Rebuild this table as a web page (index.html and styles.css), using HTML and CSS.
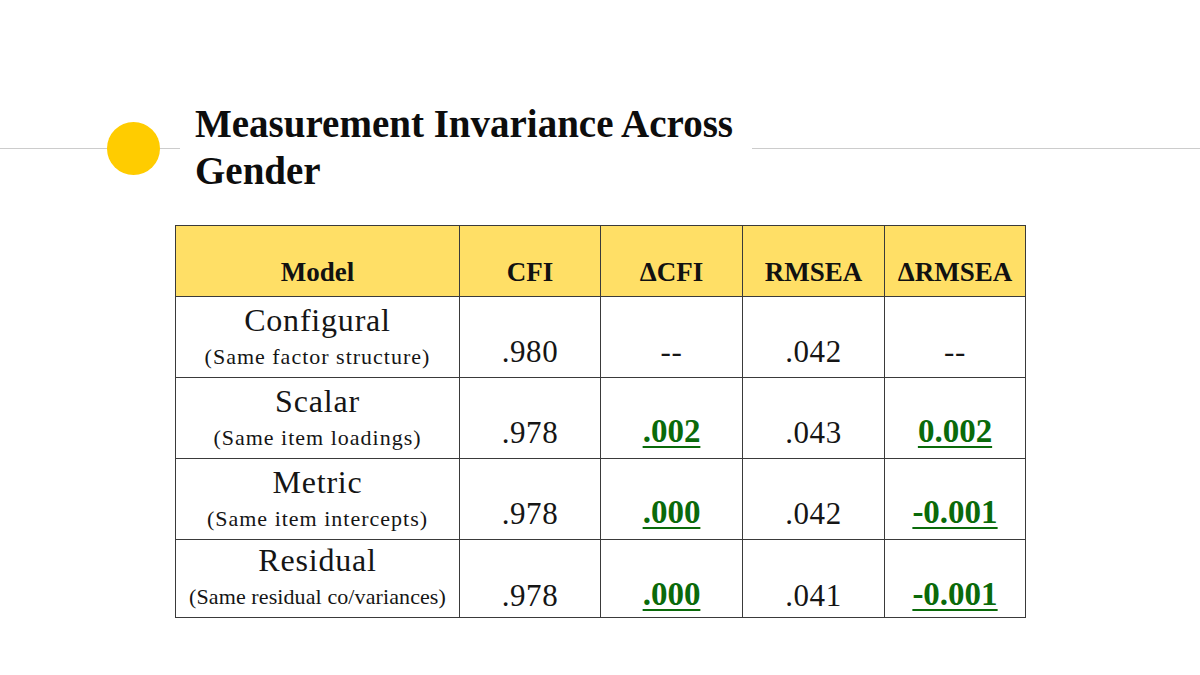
FILE: index.html
```html
<!DOCTYPE html>
<html lang="en">
<head>
<meta charset="utf-8">
<title>Measurement Invariance Across Gender</title>
<link rel="stylesheet" href="styles.css">
</head>
<body>
<div class="slide">
  <header class="title-row">
    <div class="rule rule-left"></div>
    <div class="bullet"></div>
    <div class="rule rule-gap"></div>
    <h1 class="title">Measurement Invariance Across<br>Gender</h1>
    <div class="rule rule-right"></div>
  </header>
  <table class="mi-table">
    <colgroup>
      <col class="c-model">
      <col class="c-num">
      <col class="c-num2">
      <col class="c-num2">
      <col class="c-num">
    </colgroup>
    <thead>
      <tr class="head-row">
        <th>Model</th>
        <th>CFI</th>
        <th>ΔCFI</th>
        <th>RMSEA</th>
        <th>ΔRMSEA</th>
      </tr>
    </thead>
    <tbody>
      <tr class="row">
        <td class="model"><div class="name">Configural</div><div class="sub">(Same factor structure)</div></td>
        <td class="num">.980</td>
        <td class="num">--</td>
        <td class="num">.042</td>
        <td class="num">--</td>
      </tr>
      <tr class="row">
        <td class="model"><div class="name">Scalar</div><div class="sub">(Same item loadings)</div></td>
        <td class="num">.978</td>
        <td class="num"><span class="delta">.002</span></td>
        <td class="num">.043</td>
        <td class="num"><span class="delta">0.002</span></td>
      </tr>
      <tr class="row">
        <td class="model"><div class="name">Metric</div><div class="sub">(Same item intercepts)</div></td>
        <td class="num">.978</td>
        <td class="num"><span class="delta">.000</span></td>
        <td class="num">.042</td>
        <td class="num"><span class="delta">-0.001</span></td>
      </tr>
      <tr class="row row-last">
        <td class="model"><div class="name">Residual</div><div class="sub sub-tight">(Same residual co/variances)</div></td>
        <td class="num">.978</td>
        <td class="num"><span class="delta">.000</span></td>
        <td class="num">.041</td>
        <td class="num"><span class="delta">-0.001</span></td>
      </tr>
    </tbody>
  </table>
</div>
</body>
</html>
```

FILE: styles.css
```css
* { box-sizing: border-box; }

html, body {
  margin: 0;
  padding: 0;
  background: #ffffff;
}

.slide {
  width: 1200px;
  height: 675px;
  overflow: hidden;
  font-family: "Liberation Serif", "Times New Roman", serif;
  color: #111111;
}

.title-row {
  display: flex;
  align-items: center;
  margin-top: 100px;
  height: 97px;
}

.rule {
  height: 1px;
  background: #cccccc;
}

.rule-left { flex: 0 0 107px; }
.rule-gap { flex: 0 0 20px; }
.rule-right { flex: 1 1 auto; }

.bullet {
  flex: 0 0 53px;
  width: 53px;
  height: 53px;
  border-radius: 50%;
  background: #ffcc00;
}

.title {
  flex: 0 0 572px;
  margin: 0;
  padding: 0 0 3px 15px;
  font-size: 39px;
  line-height: 47px;
  font-weight: bold;
  letter-spacing: 0;
  color: #0d0d0d;
  background: #ffffff;
}

.mi-table {
  margin: 28px 0 0 175px;
  width: 851px;
  border-collapse: collapse;
  table-layout: fixed;
}

.c-model { width: 284px; }
.c-num { width: 141px; }
.c-num2 { width: 142px; }

.mi-table th,
.mi-table td {
  border: 1px solid #3a3a3a;
  text-align: center;
  vertical-align: bottom;
  padding: 0;
}

.mi-table .head-row th {
  height: 71px;
  background: #ffdf66;
  font-size: 27px;
  line-height: 27px;
  font-weight: bold;
  padding-bottom: 10px;
  color: #111111;
}

.mi-table .row td { height: 81px; }
.mi-table .row-last td { height: 78px; }

.mi-table td.model {
  padding-bottom: 8px;
}

.model .name {
  font-size: 32px;
  line-height: 36px;
  letter-spacing: 0.8px;
  color: #151515;
}

.model .sub {
  margin-top: 7px;
  font-size: 22px;
  line-height: 24px;
  letter-spacing: 1px;
  color: #151515;
}

.model .sub-tight {
  letter-spacing: 0.1px;
}

.mi-table td.num {
  font-size: 31px;
  line-height: 31px;
  letter-spacing: 0.6px;
  padding-bottom: 10px;
  color: #151515;
}

.mi-table .row-last td.num { padding-bottom: 6px; }

.delta {
  font-size: 33px;
  line-height: 33px;
  font-weight: bold;
  color: #0a6a0a;
  text-decoration: underline;
  text-decoration-thickness: 2px;
  text-underline-offset: 4px;
  letter-spacing: 0;
}
```
